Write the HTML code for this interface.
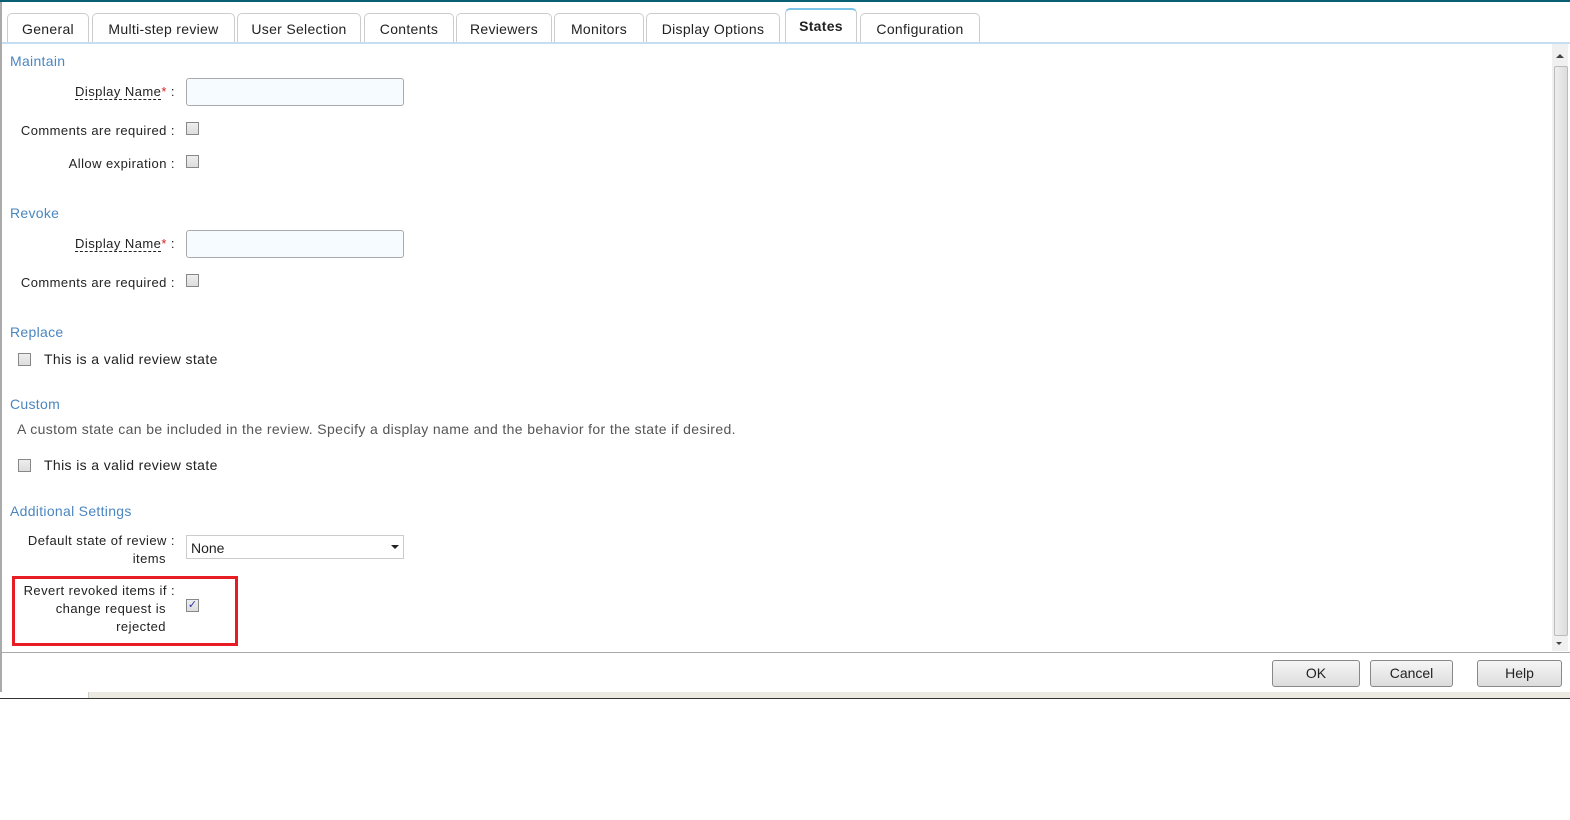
<!DOCTYPE html>
<html><head><style>
body{margin:0;width:1570px;height:820px;background:#fff;font-family:"Liberation Sans",sans-serif;position:relative;overflow:hidden;color:#222}
.a{position:absolute}
.tab{position:absolute;top:13px;height:29px;border:1px solid #ccc;border-bottom:none;border-radius:5px 5px 0 0;background:#fff;font-size:14px;line-height:30px;text-align:center;color:#222;letter-spacing:0.3px}
.h{position:absolute;left:10px;font-size:14px;color:#4a86c0;letter-spacing:0.3px}
.l{position:absolute;font-size:13px;text-align:right;color:#222;line-height:18px;letter-spacing:0.45px}
.cb{position:absolute;width:11px;height:11px;border:1px solid #888;background:linear-gradient(#eee,#ddd)}
.in{position:absolute;left:186px;width:216px;height:26px;border:1px solid #aaa;border-radius:3px;background:#f5fbfe}
.btn{position:absolute;top:660px;height:25px;border:1px solid #888;border-radius:3px;background:linear-gradient(#f6f6f6,#dcdcdc);font-size:14px;line-height:25px;text-align:center;color:#222}
.t{position:absolute;font-size:14px;letter-spacing:0.37px}
</style></head><body>
<div class="a" style="left:0;top:0;width:1570px;height:2px;background:#0b5f73"></div>
<div class="a" style="left:0;top:2px;width:2px;height:690px;background:#aaa"></div>
<div class="tab" style="left:7px;width:80px">General</div>
<div class="tab" style="left:92px;width:141px">Multi-step review</div>
<div class="tab" style="left:237px;width:122px">User Selection</div>
<div class="tab" style="left:364px;width:88px">Contents</div>
<div class="tab" style="left:456px;width:94px">Reviewers</div>
<div class="tab" style="left:554px;width:88px">Monitors</div>
<div class="tab" style="left:646px;width:132px">Display Options</div>
<div class="tab" style="left:785px;top:8px;height:34px;width:70px;border-top:2px solid #7cc4e8;font-weight:bold;line-height:32px">States</div>
<div class="tab" style="left:860px;width:118px">Configuration</div>
<div class="a" style="left:2px;top:42px;width:1568px;height:2px;background:#c6def2"></div>

<div class="h" style="top:53px">Maintain</div>
<div class="l" style="left:20px;top:83px;width:155px"><span style="border-bottom:1px dashed #222">Display Name</span><span style="color:#e02020">*</span> :</div>
<div class="in" style="top:78px"></div>
<div class="l" style="left:5px;top:122px;width:170px">Comments are required :</div>
<div class="cb" style="left:186px;top:122px"></div>
<div class="l" style="left:5px;top:155px;width:170px">Allow expiration :</div>
<div class="cb" style="left:186px;top:155px"></div>

<div class="h" style="top:205px">Revoke</div>
<div class="l" style="left:20px;top:235px;width:155px"><span style="border-bottom:1px dashed #222">Display Name</span><span style="color:#e02020">*</span> :</div>
<div class="in" style="top:230px"></div>
<div class="l" style="left:5px;top:274px;width:170px">Comments are required :</div>
<div class="cb" style="left:186px;top:274px"></div>

<div class="h" style="top:324px">Replace</div>
<div class="cb" style="left:18px;top:353px"></div>
<div class="t" style="left:44px;top:351px">This is a valid review state</div>

<div class="h" style="top:396px">Custom</div>
<div class="t" style="left:17px;top:421px;color:#555">A custom state can be included in the review. Specify a display name and the behavior for the state if desired.</div>
<div class="cb" style="left:18px;top:459px"></div>
<div class="t" style="left:44px;top:457px">This is a valid review state</div>

<div class="h" style="top:503px">Additional Settings</div>
<div class="l" style="left:5px;top:532px;width:170px">Default state of review :<br><span style="padding-right:9px">items</span></div>
<div class="a" style="left:186px;top:535px;width:216px;height:22px;border:1px solid #ccc;font-size:14px;line-height:24px"><span style="margin-left:4px">None</span><span style="position:absolute;right:4px;top:9px;border:4px solid transparent;border-top:4px solid #222"></span></div>
<div class="a" style="left:12px;top:576px;width:220px;height:64px;border:3px solid #e81c24"></div>
<div class="l" style="left:5px;top:582px;width:170px">Revert revoked items if :<br><span style="padding-right:9px">change request is</span><br><span style="padding-right:9px">rejected</span></div>
<div class="cb" style="left:186px;top:599px;color:#33a;font-size:11px;line-height:11px;text-align:center">✓</div>

<div class="a" style="left:1552px;top:44px;width:16px;height:607px;background:#f0f0f0"></div>
<div class="a" style="left:1556px;top:54px;border:4px solid transparent;border-bottom:4px solid #444;border-top:none"></div>
<div class="a" style="left:1554px;top:66px;width:12px;height:568px;border:1px solid #bbb;border-radius:2px;background:linear-gradient(90deg,#eee,#ddd)"></div>
<div class="a" style="left:1556px;top:642px;border:3px solid transparent;border-top:3px solid #444"></div>
<div class="a" style="left:2px;top:652px;width:1568px;height:1px;background:#aaa"></div>

<div class="btn" style="left:1272px;width:86px">OK</div>
<div class="btn" style="left:1370px;width:81px">Cancel</div>
<div class="btn" style="left:1477px;width:83px">Help</div>

<div class="a" style="left:0;top:692px;width:1570px;height:6px;background:#ece9e0"></div>
<div class="a" style="left:0;top:692px;width:88px;height:6px;background:#fff;border-right:1px solid #ccc"></div>
<div class="a" style="left:0;top:698px;width:1570px;height:1px;background:#333"></div>
</body></html>
